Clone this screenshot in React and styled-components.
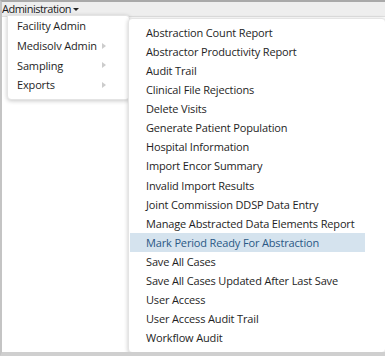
import styled, { createGlobalStyle } from 'styled-components';

const GlobalStyle = createGlobalStyle`
  html, body { margin: 0; padding: 0; background: #fff; }
  body { font-family: "Open Sans", "Liberation Sans", sans-serif; }
`;

const mainItems = [
  { label: 'Facility Admin' },
  { label: 'Medisolv Admin', sub: true },
  { label: 'Sampling', sub: true },
  { label: 'Exports', sub: true },
];

const reports = [
  'Abstraction Count Report',
  'Abstractor Productivity Report',
  'Audit Trail',
  'Clinical File Rejections',
  'Delete Visits',
  'Generate Patient Population',
  'Hospital Information',
  'Import Encor Summary',
  'Invalid Import Results',
  'Joint Commission DDSP Data Entry',
  'Manage Abstracted Data Elements Report',
  'Mark Period Ready For Abstraction',
  'Save All Cases',
  'Save All Cases Updated After Last Save',
  'User Access',
  'User Access Audit Trail',
  'Workflow Audit',
];

const App = () => {
  return (
    <Frame>
      <GlobalStyle />
      <TopBar>
        <MenuTitle>
          Administration
          <Caret />
        </MenuTitle>
      </TopBar>
      <Page />
      <MainMenu>
        {mainItems.map((item) => (
          <MainItem key={item.label}>
            <span>{item.label}</span>
            {item.sub && <SubArrow />}
          </MainItem>
        ))}
      </MainMenu>
      <ReportMenu>
        {reports.map((r) => (
          <ReportItem key={r} $active={r === 'Mark Period Ready For Abstraction'}>
            {r}
          </ReportItem>
        ))}
      </ReportMenu>
    </Frame>
  );
};

// styles
const Frame = styled.div`
  position: relative;
  width: 385px;
  height: 356px;
  box-sizing: border-box;
  border-top: 2px solid #a9a9a9;
  border-left: 2px solid #c4c4c4;
  border-bottom: 4px solid #cfcfcf;
  background: #fff;
  overflow: hidden;
  display: flex;
  flex-direction: column;
`;
const TopBar = styled.div`
  height: 14px;
  background: #eeeeee;
  border-bottom: 1px solid #e0e0e0;
  display: flex;
  align-items: center;
`;
const MenuTitle = styled.div`
  font-size: 11px;
  letter-spacing: -0.5px;
  line-height: 14px;
  color: #1a1a1a;
  display: flex;
  align-items: center;
`;
const Caret = styled.span`
  display: inline-block;
  margin-left: 2px;
  margin-top: 1px;
  width: 0;
  height: 0;
  border-left: 3px solid transparent;
  border-right: 3px solid transparent;
  border-top: 3.5px solid #222;
`;
const Page = styled.div`
  flex: 1;
`;
const MainMenu = styled.div`
  position: absolute;
  left: 5px;
  top: 13px;
  width: 123px;
  height: 85px;
  box-sizing: border-box;
  padding-top: 0;
  background: #fff;
  border-radius: 0 4px 4px 4px;
  box-shadow: 0 1px 4px rgba(0, 0, 0, 0.22);
  border: 1px solid #e4e4e4;
`;
const MainItem = styled.div`
  display: flex;
  align-items: center;
  justify-content: space-between;
  height: 19.7px;
  padding: 0 23px 0 9px;
  font-size: 11px;
  letter-spacing: -0.15px;
  white-space: nowrap;
  color: #1e1e1e;
`;
const SubArrow = styled.span`
  width: 0;
  height: 0;
  border-top: 3.5px solid transparent;
  border-bottom: 3.5px solid transparent;
  border-left: 4px solid #cccccc;
`;
const ReportMenu = styled.div`
  position: absolute;
  left: 126px;
  top: 16px;
  width: 258px;
  height: 335px;
  box-sizing: border-box;
  padding: 4px 20px 0 1px;
  background: #fff;
  border-radius: 4px;
  border: 1px solid #e4e4e4;
  box-shadow: 0 1px 4px rgba(0, 0, 0, 0.22);
`;
const ReportItem = styled.div`
  height: 19.07px;
  line-height: 19px;
  padding-left: 16px;
  font-size: 11px;
  letter-spacing: -0.15px;
  white-space: nowrap;
  color: ${(p) => (p.$active ? '#2a5885' : '#1e1e1e')};
  background: ${(p) => (p.$active ? '#d5e3ee' : 'transparent')};
`;

export default App;
